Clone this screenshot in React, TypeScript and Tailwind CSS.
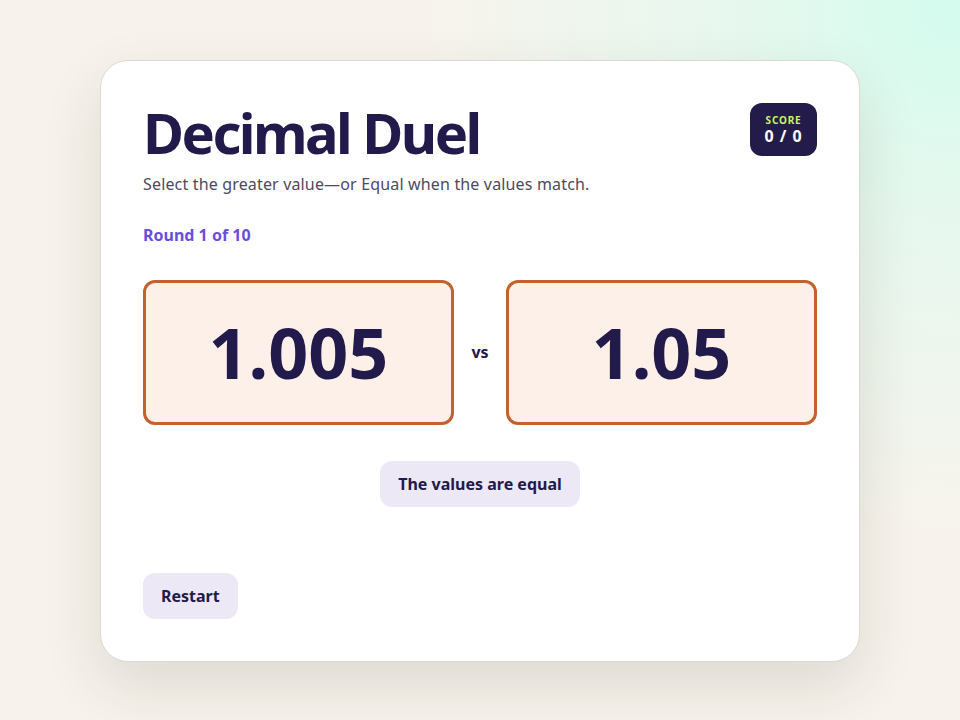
import { useState } from "react";

const font = { fontFamily: '"Noto Sans", "Open Sans", sans-serif' };

export default function App() {
  const [score] = useState({ right: 0, total: 0 });

  return (
    <div
      className="flex min-h-screen items-start justify-center bg-[#f7f3ec] bg-[radial-gradient(circle_at_100%_0%,#d3fcee_0%,#e6f8ee_18%,rgba(247,243,236,0)_45%)] pt-[60px]"
      style={font}
    >
      <main className="w-[760px] rounded-[28px] border border-[#dcd9d3] bg-white px-[42px] pb-[42px] pt-[40px] shadow-[0_24px_60px_rgba(40,30,20,0.12)]">
        <div className="flex items-start justify-between">
          <h1 className="text-[56px] font-bold leading-[1.14] tracking-[-0.045em] text-[#221a4a]">Decimal Duel</h1>
          <div className="mt-[2px] flex h-[53px] w-[67px] flex-col items-center justify-center rounded-[12px] bg-[#231c4a]">
            <span className="text-[10px] font-bold leading-none tracking-[0.08em] text-[#c8f560]">SCORE</span>
            <span className="mt-[3px] text-[16px] font-bold leading-none tracking-[0.06em] text-white">
              {score.right} / {score.total}
            </span>
          </div>
        </div>
        <p className="mt-[7px] text-[16px] tracking-[0.01em] text-[#4d4a5e]">Select the greater value—or Equal when the values match.</p>
        <p className="mt-[27px] text-[16px] font-bold text-[#6a4ee0]">Round 1 of 10</p>

        <div className="mt-[33px] grid grid-cols-[1fr_auto_1fr] items-center gap-[16px]">
          <button className="flex h-[145px] items-center justify-center rounded-[12px] border-[3px] border-[#c4622d] bg-[#fdf0e8] text-[70px] font-bold leading-none text-[#221a4a]">
            1.005
          </button>
          <span className="w-[20px] text-center text-[16px] font-bold text-[#221a4a]">vs</span>
          <button className="flex h-[145px] items-center justify-center rounded-[12px] border-[3px] border-[#c4622d] bg-[#fdf0e8] text-[70px] font-bold leading-none text-[#221a4a]">
            1.05
          </button>
        </div>

        <div className="mt-[36px] flex justify-center">
          <button className="h-[46px] rounded-[12px] bg-[#ece8f6] px-[18px] text-[16px] font-bold text-[#221a4a]">
            The values are equal
          </button>
        </div>

        <div className="mt-[66px]">
          <button className="h-[46px] rounded-[12px] bg-[#ece8f6] px-[18px] text-[16px] font-bold text-[#221a4a]">
            Restart
          </button>
        </div>
      </main>
    </div>
  );
}
